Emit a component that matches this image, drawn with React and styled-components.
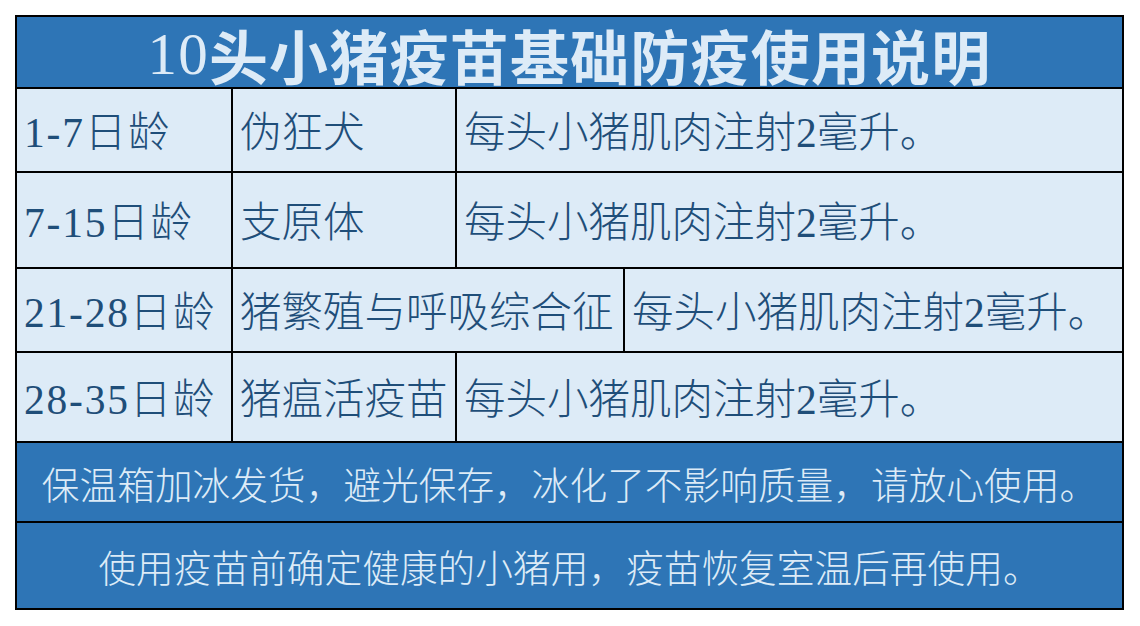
import React from 'react'
import styled, { createGlobalStyle } from 'styled-components'

const GlobalStyle = createGlobalStyle`
    html, body {
        margin: 0;
        padding: 0;
        background: #fff;
    }
    * {
        box-sizing: border-box;
    }
`

const Sheet = styled.div`
    margin: 15px 0 0 15px;
    width: 1109px;
    border: 2px solid #000;
    display: flex;
    flex-direction: column;
    font-family: 'Liberation Serif', 'Noto Sans CJK SC', serif;
`

const Title = styled.div`
    height: 72px;
    background-color: #2e75b6;
    border-bottom: 2px solid #000;
    color: #ddebf7;
    font-size: 59px;
    font-weight: 600;
    letter-spacing: 1.2px;
    display: flex;
    align-items: center;
    justify-content: center;
    padding-top: 4px;

    & .num {
        font-weight: 400;
    }
`

const Row = styled.div`
    display: grid;
    grid-template-columns: ${(p) => p.$cols};
    height: ${(p) => p.$h}px;
    background-color: #ddebf7;
    border-bottom: 2px solid #000;
`

const Cell = styled.div`
    display: flex;
    align-items: center;
    padding-left: 7px;
    padding-bottom: 3px;
    color: #1f4e79;
    font-size: 41.5px;
    font-weight: 300;
    letter-spacing: ${(p) => (p.$age ? '1.8px' : '0')};
    white-space: nowrap;
    overflow: hidden;

    & + & {
        border-left: 2px solid #000;
    }
`

const Note = styled.div`
    height: ${(p) => p.$h}px;
    background-color: #2e75b6;
    color: #ddebf7;
    font-size: 37.7px;
    font-weight: 300;
    display: flex;
    align-items: center;
    justify-content: center;
    white-space: nowrap;

    & + & {
        border-top: 2px solid #000;
    }
`

const dose = '每头小猪肌肉注射2毫升。'

const rows = [
    { age: '1-7日龄', name: '伪狂犬', h: 84, cols: '214px 224px 1fr' },
    { age: '7-15日龄', name: '支原体', h: 96, cols: '214px 224px 1fr' },
    { age: '21-28日龄', name: '猪繁殖与呼吸综合征', h: 84, cols: '214px 392px 1fr' },
    { age: '28-35日龄', name: '猪瘟活疫苗', h: 90, cols: '214px 224px 1fr' },
]

function App() {
    return (
        <>
            <GlobalStyle />
            <Sheet>
                <Title>
                    <span className="num">10</span>头小猪疫苗基础防疫使用说明
                </Title>
                {rows.map((r) => (
                    <Row key={r.age} $cols={r.cols} $h={r.h}>
                        <Cell $age>{r.age}</Cell>
                        <Cell>{r.name}</Cell>
                        <Cell>{dose}</Cell>
                    </Row>
                ))}
                <Note $h={78}>保温箱加冰发货，避光保存，冰化了不影响质量，请放心使用。</Note>
                <Note $h={87}>使用疫苗前确定健康的小猪用，疫苗恢复室温后再使用。</Note>
            </Sheet>
        </>
    )
}

export default App
